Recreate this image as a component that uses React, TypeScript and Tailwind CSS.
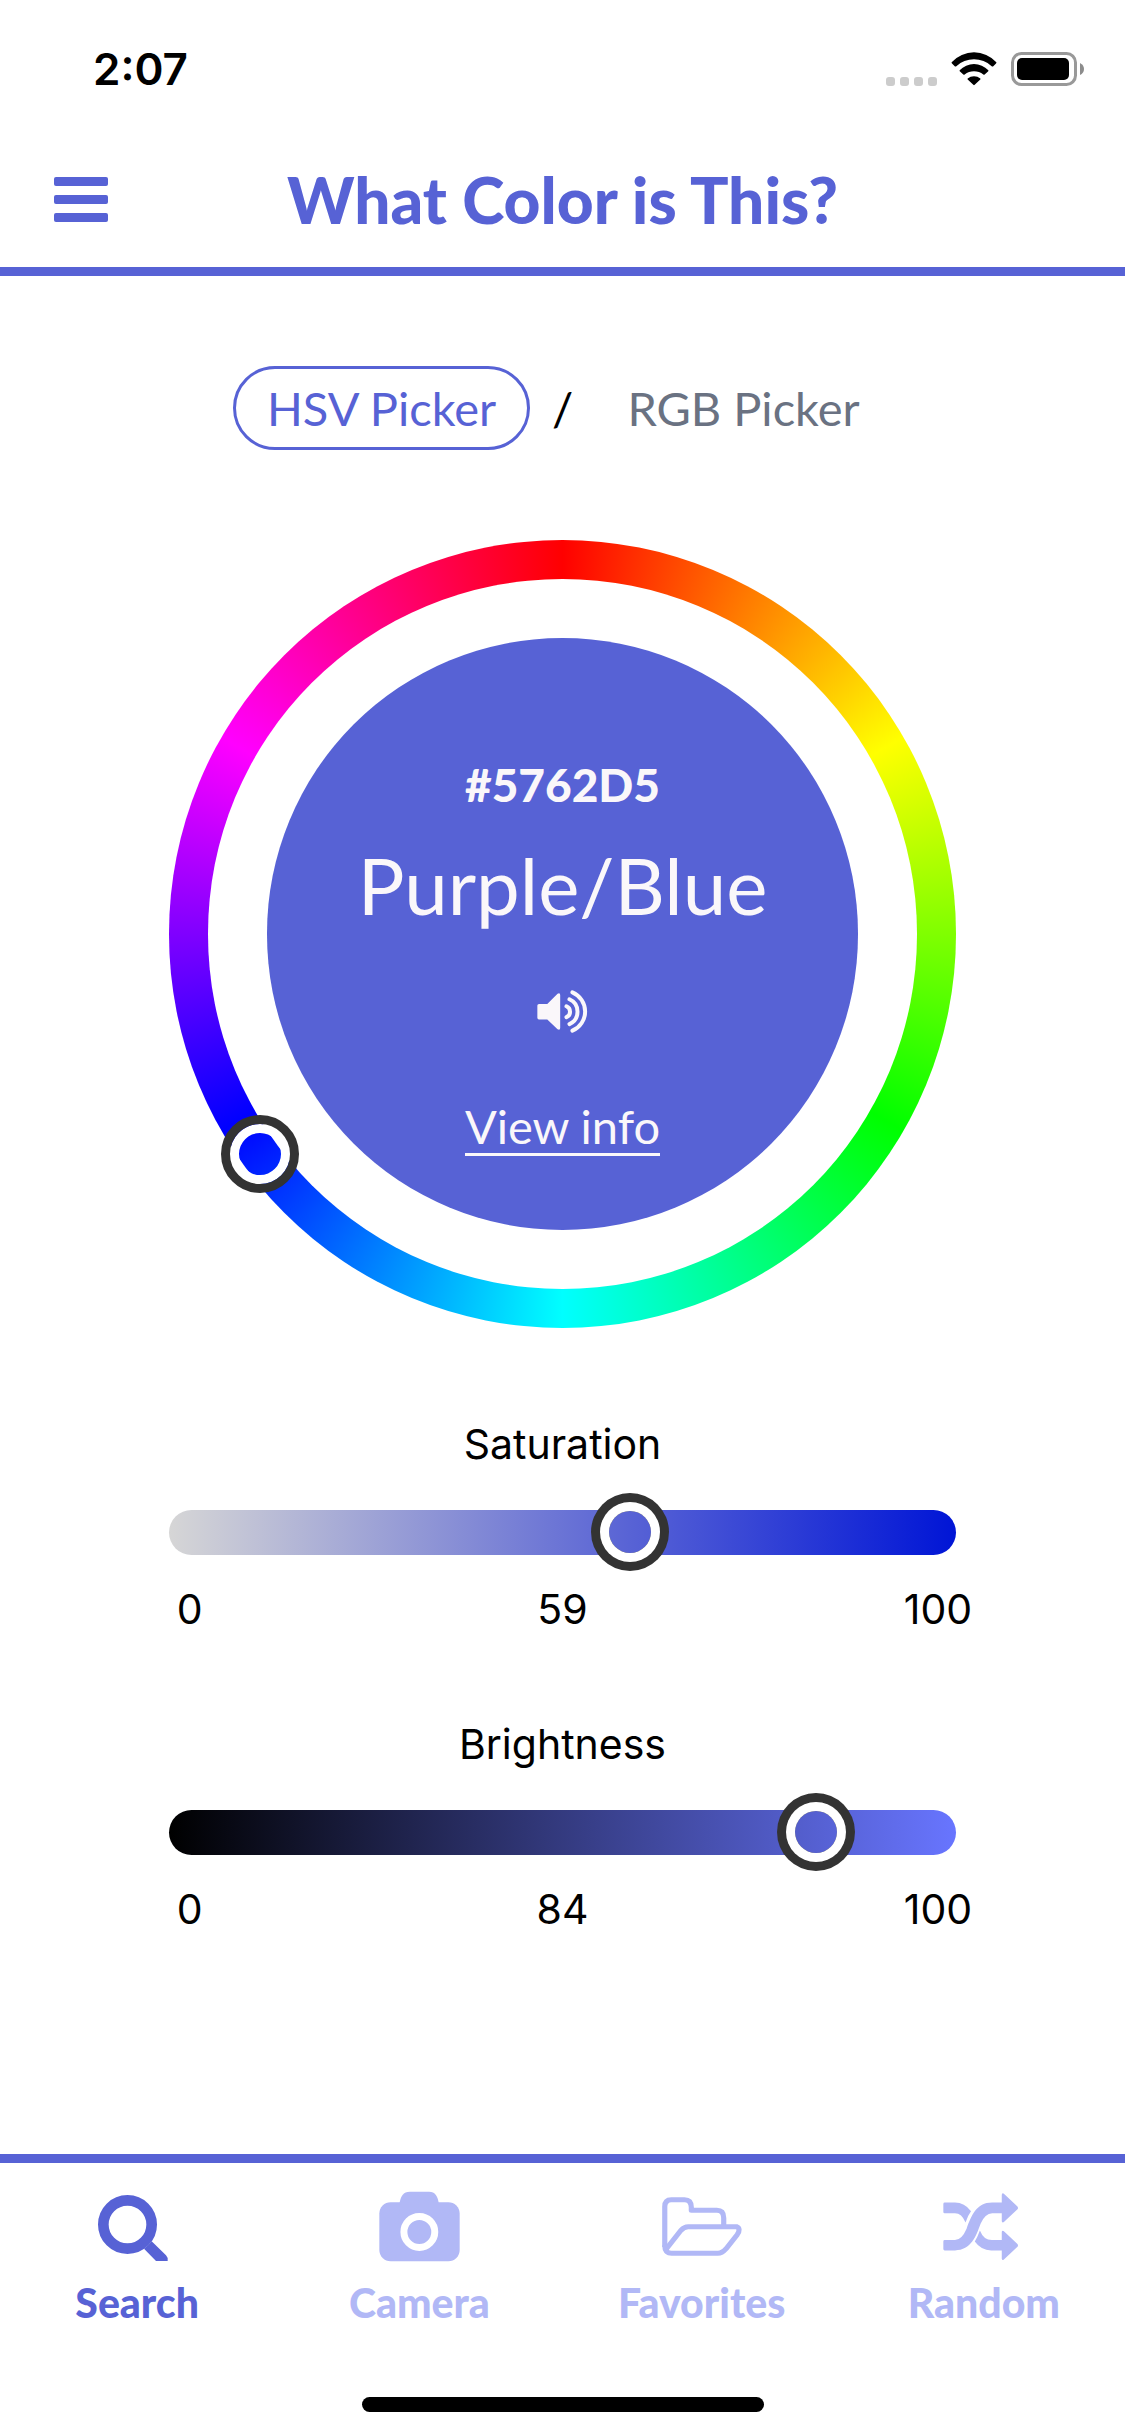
import { useState } from "react";
import type { ReactNode } from "react";

const HUE = 234;

const MenuIcon = () => (
    <svg viewBox="0 0 54 45" className="h-[45px] w-[54px]" fill="currentColor" aria-hidden="true">
        <rect width="54" height="9" rx="2" />
        <rect y="18" width="54" height="9" rx="2" />
        <rect y="36" width="54" height="9" rx="2" />
    </svg>
);

const WifiIcon = () => (
    <svg viewBox="273 65 138 101" className="h-[34px] w-[46px]" aria-hidden="true">
        <path d="M275 95 A91 91 0 0 1 409 95 Q410 97 408 99 L399 108 Q397 109 395 107 A79 79 0 0 0 289 107 Q287 109 285 108 L276 99 Q274 97 275 95Z" />
        <path d="M299 119 A60 60 0 0 1 385 119 Q386 121 384 123 L374 132 Q372 134 370 132 A45 45 0 0 0 314 132 Q312 134 310 132 L300 123 Q298 121 299 119Z" />
        <path d="M323 144 A29 29 0 0 1 361 144 Q362 146 361 147 L344 163 Q342 165 340 163 L323 147 Q322 146 323 144Z" />
    </svg>
);

const BatteryIcon = () => (
    <svg viewBox="0 0 73 34" className="h-[34px] w-[73px]" aria-hidden="true">
        <rect x="1.5" y="1.5" width="63" height="31" rx="9" fill="none" stroke="#999" strokeWidth="3" />
        <rect x="6" y="6" width="52" height="22" rx="5" />
        <path d="M69 11 Q73 13 73 17 Q73 21 69 23Z" fill="#8c8c8c" />
    </svg>
);

const VolumeIcon = () => (
    <svg viewBox="590 750 154 130" className="h-[43px] w-[51px]" aria-hidden="true">
        <path
            fill="currentColor"
            d="M596 792 H621 L652 761 Q660 757 660 765 V865 Q660 873 652 869 L621 839 H596 Q591 839 591 834 V797 Q591 792 596 792Z"
        />
        <g fill="none" stroke="currentColor" strokeWidth="12" strokeLinecap="round">
            <path d="M679 799 A18 18 0 0 1 679 832" />
            <path d="M688 778 A41 41 0 0 1 688 853" />
            <path d="M697 757 A63 63 0 0 1 697 873" />
        </g>
    </svg>
);

const SearchIcon = () => (
    <svg viewBox="177 156 234 210" className="h-[70px] w-[78px]" aria-hidden="true">
        <circle cx="265.5" cy="256.5" r="72.5" fill="none" stroke="currentColor" strokeWidth="32" />
        <path fill="currentColor" d="M338 307 L381 349 Q388 356 386 366 H351 L315 329 Q330 318 338 307Z" />
    </svg>
);

const CameraIcon = () => (
    <svg viewBox="1019 150 244 212" className="h-[71px] w-[81px]" aria-hidden="true">
        <rect x="1020" y="183" width="242" height="178" rx="34" fill="currentColor" />
        <path fill="currentColor" d="M1080 190 C1084 164 1092 151 1112 151 H1170 C1188 151 1196 164 1200 190Z" />
        <circle cx="1140.5" cy="272.5" r="46.5" fill="none" stroke="#fff" strokeWidth="21" />
    </svg>
);

const FolderIcon = () => (
    <svg
        viewBox="238 168 232 177"
        preserveAspectRatio="none"
        className="h-[59px] w-[80px]"
        fill="none"
        stroke="currentColor"
        strokeWidth="15"
        strokeLinejoin="round"
        aria-hidden="true"
    >
        <path d="M246 318 V197 Q246 176 265 176 H303 Q323 176 323 199 V208 H397 Q417 208 417 231 V255" />
        <path d="M246 313 Q246 337 266 337 H400 Q412 337 424 323 L456 281 Q468 263 454 257 H314 Q302 257 293 268 L252 322 Q247 337 266 337" />
    </svg>
);

const ShuffleIcon = () => (
    <svg
        viewBox="1053 155 240 202"
        preserveAspectRatio="none"
        className="h-[67px] w-[82px]"
        fill="currentColor"
        aria-hidden="true"
    >
        <path d="M1058 184 H1088 Q1116 184 1135 210 Q1126 222 1119 244 Q1108 216 1088 216 H1058 Q1054 216 1054 212 V188 Q1054 184 1058 184Z" />
        <path d="M1225 160 Q1227 153 1232 158 L1271 196 Q1274 200 1271 204 L1232 242 Q1227 247 1225 240 V216 H1197 Q1176 216 1163 248 C1150 284 1136 328 1088 328 H1058 Q1054 328 1054 324 V301 Q1054 297 1058 297 H1088 Q1108 297 1122 263 C1136 224 1150 184 1197 184 H1225Z" />
        <path d="M1161 268 Q1172 297 1196 297 H1225 V272 Q1227 266 1232 271 L1271 309 Q1274 313 1271 317 L1232 355 Q1227 360 1225 353 V328 H1194 Q1164 327 1146 301 Q1154 288 1161 268Z" />
    </svg>
);

const tabs: { label: string; icon: ReactNode }[] = [
    { label: "Search", icon: <SearchIcon /> },
    { label: "Camera", icon: <CameraIcon /> },
    { label: "Favorites", icon: <FolderIcon /> },
    { label: "Random", icon: <ShuffleIcon /> },
];

interface SliderProps {
    id: string;
    label: string;
    initial: number;
    trackClass: string;
}

const Slider = ({ id, label, initial, trackClass }: SliderProps) => {
    const [value, setValue] = useState(initial);

    return (
        <div className="flex flex-col font-['Inter',sans-serif] text-[41px] leading-[52px]">
            <label htmlFor={id} className="text-center">{label}</label>
            <input
                id={id}
                type="range"
                min={0}
                max={100}
                value={value}
                onChange={(e) => setValue(Number(e.target.value))}
                className={`mt-10 block h-[45px] w-full appearance-none rounded-full [&::-webkit-slider-thumb]:size-[42px] [&::-webkit-slider-thumb]:appearance-none [&::-webkit-slider-thumb]:rounded-full [&::-webkit-slider-thumb]:bg-transparent [&::-webkit-slider-thumb]:shadow-[0_0_0_9px_#fff,0_0_0_18px_#333] ${trackClass}`}
            />
            <div className="-mr-4 mt-7 flex justify-between pl-2">
                <span className="w-14">0</span>
                <span>{value}</span>
                <span className="w-20 text-right">100</span>
            </div>
        </div>
    );
};

const ColorWheel = () => {
    const angle = (HUE * Math.PI) / 180;

    return (
        <div className="relative aspect-square w-full rounded-full bg-[conic-gradient(#f00,#ff0,#0f0,#0ff,#00f,#f0f,#f00)] p-[39px]">
            <div className="size-full rounded-full bg-white p-[59px]">
                <div className="flex size-full flex-col items-center rounded-full bg-[#5762d5] pt-[117px] text-[#faf7fa]">
                    <p className="text-[46px] leading-[60px] font-black">#5762D5</p>
                    <h2 className="mt-5 text-[78px] leading-[100px]">Purple/Blue</h2>
                    <button type="button" aria-label="Speak color name" className="mt-[55px]">
                        <VolumeIcon />
                    </button>
                    <a href="#info" className="mt-[66px] border-b-3 border-current text-[47px] leading-[54px]">
                        View info
                    </a>
                </div>
            </div>
            <span
                className="absolute size-[78px] -translate-x-1/2 -translate-y-1/2 rounded-full border-9 border-[#333] shadow-[inset_0_0_0_9px_#fff]"
                style={{ left: `${50 + 47.5 * Math.sin(angle)}%`, top: `${50 - 47.5 * Math.cos(angle)}%` }}
            />
        </div>
    );
};

export default function App() {
    const [mode, setMode] = useState("HSV");

    return (
        <div className="flex min-h-screen flex-col overflow-x-hidden bg-white font-['Lato',sans-serif] text-black">
            <div className="flex h-[132px] items-center justify-between pt-[6px] pr-[41px] pl-[93px]">
                <span className="font-['Inter',sans-serif] text-[44px] leading-[52px] font-semibold">2:07</span>
                <div className="flex items-center">
                    <div className="flex gap-[5px] self-end">
                        <i className="size-[9px] rounded-[3px] bg-[#ccc]" />
                        <i className="size-[9px] rounded-[3px] bg-[#ccc]" />
                        <i className="size-[9px] rounded-[3px] bg-[#ccc]" />
                        <i className="size-[9px] rounded-[3px] bg-[#ccc]" />
                    </div>
                    <span className="ml-[14px]"><WifiIcon /></span>
                    <span className="ml-[14px]"><BatteryIcon /></span>
                </div>
            </div>

            <header className="grid h-36 grid-cols-[108px_1fr_108px] items-center border-b-9 border-[#5762d5] text-[#5762d5]">
                <button type="button" aria-label="Open menu" className="pl-[54px]">
                    <MenuIcon />
                </button>
                <h1 className="text-center text-[64px] leading-[76px] font-black">What Color is This?</h1>
            </header>

            <main className="mx-auto flex w-[70%] flex-1 flex-col">
                <div className="mt-[90px] flex h-[84px] items-center justify-center text-[47px] leading-[60px]">
                    <button
                        type="button"
                        aria-pressed={mode === "HSV"}
                        onClick={() => setMode("HSV")}
                        className={`h-[84px] w-[297px] rounded-full border-3 ${mode === "HSV" ? "border-[#5762d5] text-[#5762d5]" : "border-transparent text-gray-500"}`}
                    >
                        HSV Picker
                    </button>
                    <span className="w-[65px] text-center">/</span>
                    <button
                        type="button"
                        aria-pressed={mode === "RGB"}
                        onClick={() => setMode("RGB")}
                        className={`h-[84px] w-[297px] rounded-full border-3 ${mode === "RGB" ? "border-[#5762d5] text-[#5762d5]" : "border-transparent text-gray-500"}`}
                    >
                        RGB Picker
                    </button>
                </div>

                <div className="mt-[90px]">
                    <ColorWheel />
                </div>

                <div className="mt-[90px] flex flex-col gap-[83px]">
                    <Slider
                        id="saturation"
                        label="Saturation"
                        initial={59}
                        trackClass="bg-[linear-gradient(to_right,#d6d6d6,#5762d5_59%,#0015d6)]"
                    />
                    <Slider
                        id="brightness"
                        label="Brightness"
                        initial={84}
                        trackClass="bg-[linear-gradient(to_right,#000,#6875ff)]"
                    />
                </div>
            </main>

            <nav className="-ml-1 grid h-[243px] grid-cols-4 border-t-9 border-[#5762d5]">
                {tabs.map(({ label, icon }) => (
                    <a
                        key={label}
                        href={`#${label.toLowerCase()}`}
                        className={`flex flex-col items-center pt-6 text-[41px] leading-[48px] font-black ${label === "Search" ? "text-[#5762d5]" : "text-[#b1b8f6]"}`}
                    >
                        <span className="mb-[14px] flex h-[78px] items-center">{icon}</span>
                        {label}
                    </a>
                ))}
            </nav>
            <div className="flex h-[39px] justify-center">
                <div className="h-[15px] w-[402px] rounded-full bg-black" />
            </div>
        </div>
    );
}
